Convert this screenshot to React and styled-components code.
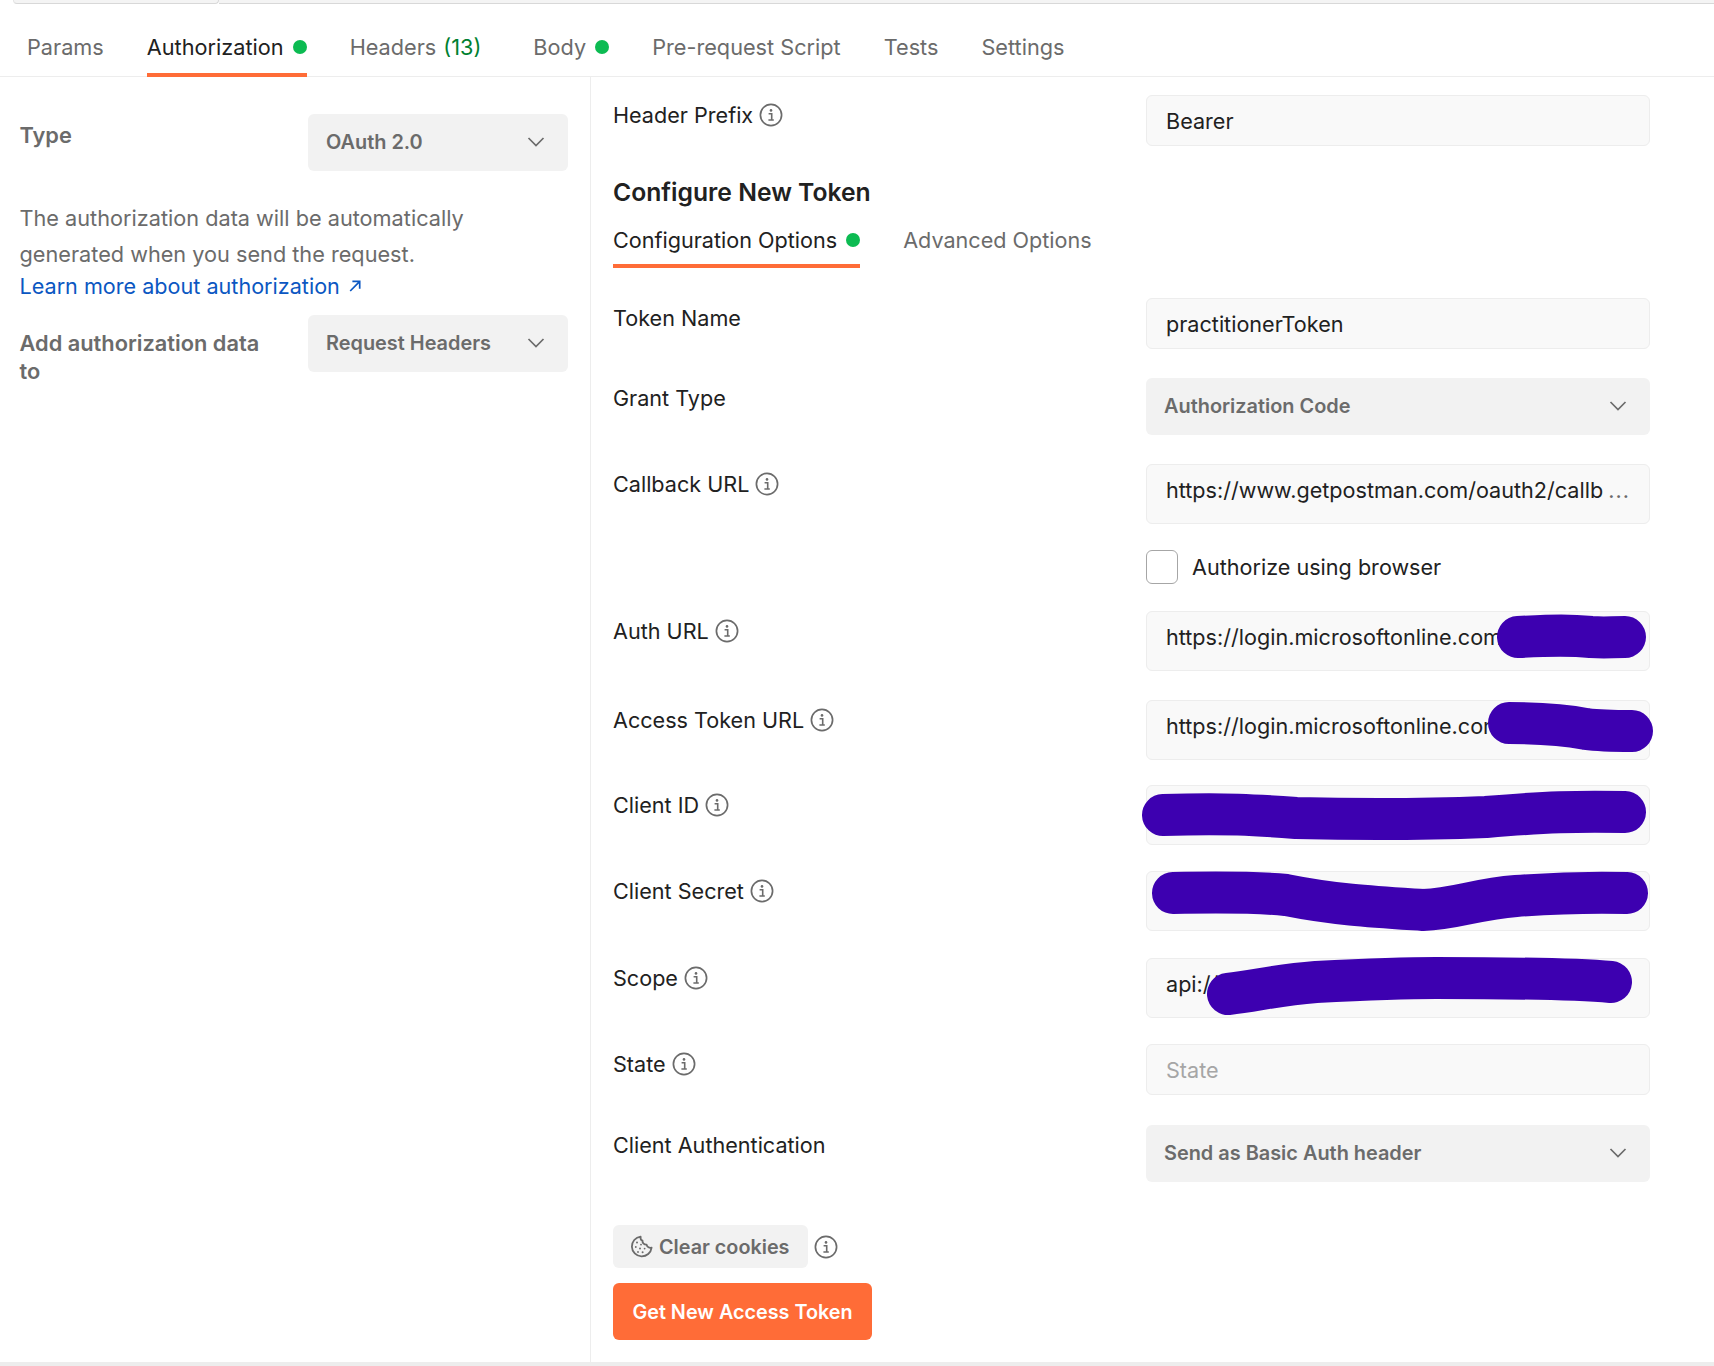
import React from "react";
import styled, { createGlobalStyle } from "styled-components";

const GlobalStyle = createGlobalStyle`
  html, body {
    margin: 0;
    padding: 0;
    background: #fff;
  }
  * {
    box-sizing: border-box;
  }
`;

const InfoIcon = () => (
  <svg width="24" height="24" viewBox="0 0 24 24" fill="none">
    <circle cx="12" cy="12" r="10.6" stroke="#6b6b6b" strokeWidth="1.7" />
    <circle cx="12" cy="7.4" r="1.3" fill="#6b6b6b" />
    <path d="M9.6 10.7h3.1v6.2M9.4 17h5.4" stroke="#6b6b6b" strokeWidth="1.6" />
  </svg>
);

const Chevron = () => (
  <svg width="20" height="20" viewBox="0 0 20 20" fill="none">
    <path d="M2.5 6 10 13.5 17.5 6" stroke="#6b6b6b" strokeWidth="1.7" />
  </svg>
);

const CookieIcon = () => (
  <svg width="23" height="23" viewBox="0 0 23 23" fill="none">
    <path
      d="M10.6 1.6a9.9 9.9 0 1 0 11 11c-2.2.7-4.5-.6-5-2.9-2.4.2-4.3-1.6-4.1-4-1.5-.5-2.2-2.2-1.9-4.1Z"
      stroke="#6b6b6b"
      strokeWidth="1.8"
      strokeLinejoin="round"
    />
    <g fill="#6b6b6b">
      <circle cx="7" cy="7.6" r="1" />
      <circle cx="11" cy="9.6" r="0.9" />
      <circle cx="5.8" cy="12" r="0.9" />
      <circle cx="10" cy="13.4" r="1" />
      <circle cx="14.6" cy="13.6" r="0.9" />
      <circle cx="8" cy="17" r="0.9" />
      <circle cx="12.6" cy="17.2" r="1" />
    </g>
  </svg>
);

const ExternalArrow = () => (
  <svg width="14" height="14" viewBox="0 0 14 14" fill="none">
    <path d="M2.2 12 11.5 2.7M4.4 2.4h7.3v7.3" stroke="#0b57c2" strokeWidth="1.7" />
  </svg>
);

// hand drawn strokes that hide the secrets, coordinates are px from the field corner
const SCRAWLS = {
  auth: "M372 26C410 24 425 24 445 26C460 27 465 26 479 26",
  access: "M363 23C400 23 420 25 440 29C455 31 470 31 486 31",
  clientId: "M17 30C80 28 110 30 150 33C230 35 290 34 340 32C400 27 430 26 479 27",
  secret: "M27 22C80 21 110 21 140 24C190 34 230 36 277 39C310 38 330 28 370 25C410 22 440 21 481 22",
  scope: "M82 36C110 33 130 27 170 24C210 22 250 20 290 20C350 20 420 20 465 24",
};

const Scrawl = ({ name }) => (
  <ScrawlSvg>
    <path d={SCRAWLS[name]} stroke="#3d00b0" strokeWidth="42" strokeLinecap="round" fill="none" />
  </ScrawlSvg>
);

const Row = ({ label, info, top, children }) => (
  <FieldRow $top={top}>
    <FieldLabel>
      {label}
      {info && <InfoIcon />}
    </FieldLabel>
    <FieldValue>{children}</FieldValue>
  </FieldRow>
);

const App = () => {
  return (
    <Page>
      <GlobalStyle />
      <TopStrip>
        <TopTab />
        <TopRest />
      </TopStrip>
      <TabBar>
        <Tab>Params</Tab>
        <Tab $active>
          Authorization
          <Dot />
        </Tab>
        <Tab>
          Headers
          <Count>(13)</Count>
        </Tab>
        <Tab>
          Body
          <Dot />
        </Tab>
        <Tab>Pre-request Script</Tab>
        <Tab>Tests</Tab>
        <Tab>Settings</Tab>
      </TabBar>
      <Panes>
        <LeftPane>
          <SideRow>
            <SideLabel>Type</SideLabel>
            <Select $side>
              OAuth 2.0
              <Chevron />
            </Select>
          </SideRow>
          <Help>
            The authorization data will be automatically
            <br />
            generated when you send the request.
          </Help>
          <LearnMore>
            Learn more about authorization <ExternalArrow />
          </LearnMore>
          <AddRow>
            <AddLabel>Add authorization data to</AddLabel>
            <Select $side>
              Request Headers
              <Chevron />
            </Select>
          </AddRow>
        </LeftPane>
        <RightPane>
          <Row label="Header Prefix" info>
            <Input $plain>Bearer</Input>
          </Row>
          <Heading>Configure New Token</Heading>
          <SubTabs>
            <SubTab $active>
              Configuration Options
              <Dot />
            </SubTab>
            <SubTab>Advanced Options</SubTab>
          </SubTabs>
          <Row label="Token Name" top={30}>
            <Input $plain>practitionerToken</Input>
          </Row>
          <Row label="Grant Type" top={29}>
            <Select>
              Authorization Code
              <Chevron />
            </Select>
          </Row>
          <Row label="Callback URL" info top={29}>
            <Input>
              <InputText>https://www.getpostman.com/oauth2/callb</InputText>
              <Ellipsis>...</Ellipsis>
            </Input>
          </Row>
          <CheckRow>
            <CheckBox />
            Authorize using browser
          </CheckRow>
          <Row label="Auth URL" info top={27}>
            <Input>
              <InputText>https://login.microsoftonline.com</InputText>
              <Scrawl name="auth" />
            </Input>
          </Row>
          <Row label="Access Token URL" info top={29}>
            <Input>
              <InputText>https://login.microsoftonline.com</InputText>
              <Scrawl name="access" />
            </Input>
          </Row>
          <Row label="Client ID" info top={25}>
            <Input>
              <Scrawl name="clientId" />
            </Input>
          </Row>
          <Row label="Client Secret" info top={26}>
            <Input>
              <Scrawl name="secret" />
            </Input>
          </Row>
          <Row label="Scope" info top={27}>
            <Input>
              <InputText>api://</InputText>
              <Scrawl name="scope" />
            </Input>
          </Row>
          <Row label="State" info top={26}>
            <Input $plain $placeholder>
              State
            </Input>
          </Row>
          <Row label="Client Authentication" top={30}>
            <Select>
              Send as Basic Auth header
              <Chevron />
            </Select>
          </Row>
          <CookieRow>
            <CookieButton>
              <CookieIcon />
              Clear cookies
            </CookieButton>
            <InfoIcon />
          </CookieRow>
          <TokenButton>Get New Access Token</TokenButton>
        </RightPane>
      </Panes>
      <BottomLine />
    </Page>
  );
};

export default App;

const Page = styled.div`
  width: 1714px;
  height: 1366px;
  overflow: hidden;
  display: flex;
  flex-direction: column;
  font-family: Inter, "Noto Sans", sans-serif;
  font-size: 21.6px;
  color: #212121;
  background: #fff;
`;

const TopStrip = styled.div`
  height: 4px;
  display: flex;
  padding-left: 13px;
`;

const TopTab = styled.div`
  width: 206px;
  background: #f4f4f4;
  border-bottom: 1px solid #d8d8d8;
  border-right: 1px solid #d8d8d8;
  border-left: 1px solid #e4e4e4;
  border-radius: 0 0 4px 4px;
`;

const TopRest = styled.div`
  flex: 1;
  background: #f4f4f4;
  border-bottom: 1px solid #d8d8d8;
`;

const TabBar = styled.div`
  height: 73px;
  display: flex;
  align-items: stretch;
  gap: 43px;
  padding-left: 27px;
  border-bottom: 1px solid #ededed;
  font-size: 21.7px;
`;

const Tab = styled.div`
  display: flex;
  align-items: center;
  gap: 9px;
  height: 73px;
  padding-top: 17px;
  color: ${(p) => (p.$active ? "#212121" : "#6b6b6b")};
  border-bottom: 4px solid ${(p) => (p.$active ? "#ff6c37" : "transparent")};
`;

const Count = styled.span`
  margin: 0 9px 0 -2px;
  color: #007f31;
`;

const Dot = styled.span`
  width: 14px;
  height: 14px;
  border-radius: 50%;
  background: #0cbb52;
`;

const Panes = styled.div`
  flex: 1;
  display: flex;
  min-height: 0;
`;

const LeftPane = styled.div`
  width: 591px;
  flex-shrink: 0;
  padding: 37px 22px 0 19.5px;
  border-right: 1px solid #ededed;
`;

const SideRow = styled.div`
  display: flex;
  justify-content: space-between;
  align-items: flex-start;
`;

const AddRow = styled(SideRow)`
  margin-top: 15px;
`;

const SideLabel = styled.div`
  width: 260px;
  padding-top: 7px;
  font-size: 21.8px;
  font-weight: 600;
  line-height: 28px;
  color: #6b6b6b;
`;

const AddLabel = styled(SideLabel)`
  padding-top: 14px;
`;

const Select = styled.div`
  width: ${(p) => (p.$side ? "260px" : "100%")};
  height: 57px;
  display: flex;
  align-items: center;
  justify-content: space-between;
  padding: 0 22px 1px 18px;
  border-radius: 6px;
  background: #f2f2f2;
  font-size: 19.9px;
  font-weight: 600;
  color: #6b6b6b;
`;

const Help = styled.p`
  margin: 29px 0 0;
  font-size: 21.7px;
  line-height: 36px;
  color: #6b6b6b;
`;

const LearnMore = styled.div`
  display: flex;
  align-items: center;
  gap: 8px;
  height: 28px;
  color: #0b57c2;
`;

const RightPane = styled.div`
  flex: 1;
  padding: 18px 64px 0 22px;
`;

const FieldRow = styled.div`
  display: grid;
  grid-template-columns: 533px 504px;
  margin-top: ${(p) => p.$top || 0}px;
`;

const FieldLabel = styled.div`
  display: flex;
  align-items: center;
  gap: 6px;
  height: 39px;
`;

const FieldValue = styled.div`
  min-width: 0;
`;

const Input = styled.div`
  position: relative;
  height: ${(p) => (p.$plain ? "51px" : "60px")};
  display: flex;
  align-items: ${(p) => (p.$plain ? "center" : "flex-start")};
  padding: ${(p) => (p.$plain ? "0 19px 0" : "9px 19px 0")};
  border: 1px solid #ededed;
  border-radius: 6px;
  background: #f9f9f9;
  color: ${(p) => (p.$placeholder ? "#a6a6a6" : "#212121")};
`;

const InputText = styled.div`
  white-space: nowrap;
  line-height: 32px;
`;

const Ellipsis = styled.span`
  position: absolute;
  top: 9px;
  right: 19px;
  line-height: 32px;
  letter-spacing: 1px;
  color: #6b6b6b;
`;

const ScrawlSvg = styled.svg`
  position: absolute;
  top: -1px;
  left: -1px;
  width: 100%;
  height: 100%;
  overflow: visible;
`;

const Heading = styled.h2`
  margin: 31px 0 0;
  font-size: 24.7px;
  font-weight: 600;
  line-height: 30px;
  color: #212121;
`;

const SubTabs = styled.div`
  display: flex;
  gap: 43px;
  margin-top: 14px;
`;

const SubTab = styled.div`
  display: flex;
  align-items: center;
  gap: 9px;
  height: 47px;
  padding-bottom: 5px;
  color: ${(p) => (p.$active ? "#212121" : "#6b6b6b")};
  border-bottom: 4px solid ${(p) => (p.$active ? "#ff6c37" : "transparent")};
`;

const CheckRow = styled.div`
  display: flex;
  align-items: center;
  gap: 14px;
  height: 34px;
  margin: 26px 0 0 533px;
`;

const CheckBox = styled.div`
  width: 32px;
  height: 34px;
  border: 1px solid #a6a6a6;
  border-radius: 6px;
  background: #fff;
`;

const CookieRow = styled.div`
  display: flex;
  align-items: center;
  gap: 6px;
  margin-top: 43px;
`;

const CookieButton = styled.div`
  display: flex;
  align-items: center;
  gap: 6px;
  width: 195px;
  height: 43px;
  padding-left: 17px;
  border-radius: 6px;
  background: #f2f2f2;
  font-size: 19.8px;
  font-weight: 600;
  color: #6b6b6b;
`;

const TokenButton = styled.div`
  display: flex;
  align-items: center;
  justify-content: center;
  width: 259px;
  height: 57px;
  margin-top: 15px;
  border-radius: 6px;
  background: #ff6c37;
  font-size: 19.8px;
  font-weight: 600;
  color: #fff;
`;

const BottomLine = styled.div`
  height: 4px;
  flex-shrink: 0;
  background: #ededed;
`;
